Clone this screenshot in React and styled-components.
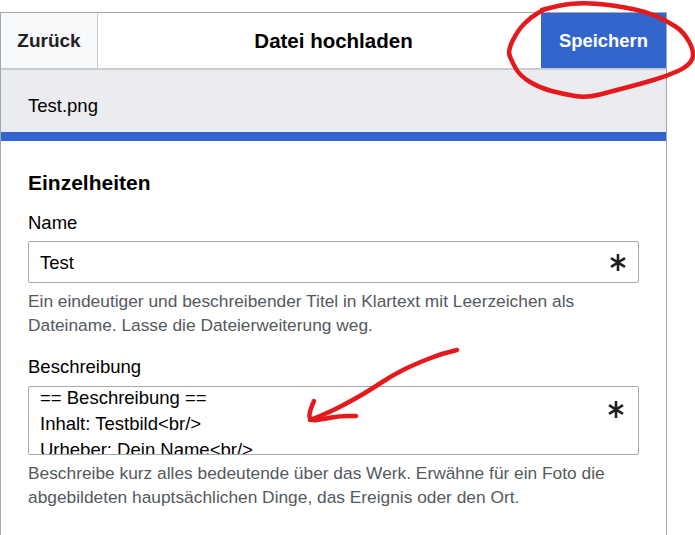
import React from 'react';
import styled, { createGlobalStyle } from 'styled-components';

const GlobalStyle = createGlobalStyle`
  html, body {
    margin: 0;
    padding: 0;
    background: #fff;
    overflow: hidden;
  }
  body {
    font-family: "Liberation Sans", Arial, sans-serif;
    color: #000;
  }
`;

const Page = styled.div`
  position: relative;
  width: 695px;
  height: 535px;
  overflow: hidden;
  padding-top: 12px;
  box-sizing: border-box;
`;

const Dialog = styled.section`
  width: 667px;
  height: 530px;
  box-sizing: border-box;
  border: 1px solid #a2a9b1;
  border-bottom: 0;
`;

const Header = styled.header`
  display: flex;
  align-items: stretch;
  height: 57px;
  box-sizing: border-box;
  border-bottom: 2px solid #c8ccd1;
`;

const BackButton = styled.div`
  width: 96px;
  display: flex;
  align-items: center;
  justify-content: center;
  background: #f8f9fa;
  border-right: 1px solid #c8ccd1;
  color: #202122;
  font-size: 19px;
  font-weight: 700;
`;

const Title = styled.h1`
  flex: 1;
  margin: 0;
  padding-left: 28px;
  display: flex;
  align-items: center;
  justify-content: center;
  font-size: 20.5px;
  font-weight: 700;
`;

const SaveButton = styled.div`
  width: 125px;
  display: flex;
  align-items: center;
  justify-content: center;
  background: #36c;
  color: #fff;
  font-size: 18.4px;
  font-weight: 700;
`;

const FileBand = styled.div`
  height: 62px;
  box-sizing: border-box;
  display: flex;
  align-items: center;
  padding: 10px 0 0 27px;
  background: #eaecf0;
  font-size: 18.5px;
`;

const ProgressBar = styled.div`
  height: 9px;
  background: #36c;
`;

const Body = styled.div`
  padding: 30px 27px 0;
`;

const SectionTitle = styled.h2`
  margin: 0 0 16px;
  font-size: 21px;
  line-height: 24px;
  font-weight: 700;
`;

const Field = styled.div`
  margin-bottom: 18px;
`;

const Label = styled.div`
  font-size: 18.5px;
  line-height: 24px;
  margin-bottom: ${(p) => p.$gap}px;
`;

const InputBox = styled.div`
  position: relative;
  width: 611px;
  box-sizing: border-box;
  height: ${(p) => p.$height}px;
  border: 1px solid #a2a9b1;
  border-radius: 2px;
  padding: 0 11px;
  font-size: 18.5px;
  line-height: 26px;
  overflow: hidden;
`;

const InputText = styled.div`
  margin-top: ${(p) => p.$offset}px;
`;

const Required = styled.svg`
  position: absolute;
  right: ${(p) => p.$right}px;
  top: ${(p) => p.$top}px;
  width: 16px;
  height: 17px;
`;

const Help = styled.p`
  margin: 6px 0 0;
  font-size: 17.33px;
  line-height: 24px;
  color: #54595d;
`;

const Scribbles = styled.svg`
  position: absolute;
  left: 0;
  top: 0;
  width: 695px;
  height: 535px;
  pointer-events: none;
`;

const Stroke = styled.path`
  fill: none;
  stroke: #e5191c;
  stroke-width: 4.5;
  stroke-linecap: round;
  stroke-linejoin: round;
`;

// hand drawn marks, smoothed through the midpoints
function smooth(points) {
  let d = `M${points[0][0]} ${points[0][1]}`;
  for (let i = 1; i < points.length - 1; i++) {
    const mx = (points[i][0] + points[i + 1][0]) / 2;
    const my = (points[i][1] + points[i + 1][1]) / 2;
    d += `Q${points[i][0]} ${points[i][1]} ${mx} ${my}`;
  }
  const last = points[points.length - 1];
  return `${d}L${last[0]} ${last[1]}`;
}

const circle = [
  [542, 10], [560, 5], [580, 3], [602, 4], [623, 7], [647, 12], [667, 21], [684, 32],
  [695, 53], [689, 66], [667, 76], [640, 84], [613, 91], [587, 98], [563, 94], [540, 88],
  [520, 76], [511, 60], [508, 50], [518, 30], [531, 17], [545, 9],
];

const arrowShaft = [
  [457, 350], [443, 353], [413, 365], [393, 375], [370, 390], [353, 400], [330, 412], [310, 420],
];

const arrowHead = [
  [314, 401], [309, 412], [310, 421], [323, 419], [340, 416], [356, 416],
];

function Star({ top, right }) {
  return (
    <Required $top={top} $right={right} viewBox="0 0 16 17">
      <path d="M8 0v17M1 4.2l14 8.6M15 4.2 1 12.8" stroke="#202122" strokeWidth="2.6" fill="none" />
    </Required>
  );
}

export default function App() {
  return (
    <Page>
      <GlobalStyle />
      <Dialog>
        <Header>
          <BackButton>Zurück</BackButton>
          <Title>Datei hochladen</Title>
          <SaveButton>Speichern</SaveButton>
        </Header>
        <FileBand>Test.png</FileBand>
        <ProgressBar />
        <Body>
          <SectionTitle>Einzelheiten</SectionTitle>
          <Field>
            <Label $gap={6}>Name</Label>
            <InputBox $height={42}>
              <InputText $offset={8}>Test</InputText>
              <Star top={12} right={12} />
            </InputBox>
            <Help>
              Ein eindeutiger und beschreibender Titel in Klartext mit Leerzeichen als
              Dateiname. Lasse die Dateierweiterung weg.
            </Help>
          </Field>
          <Field>
            <Label $gap={7}>Beschreibung</Label>
            <InputBox $height={69}>
              <InputText $offset={-2}>
                == Beschreibung ==
                <br />
                Inhalt: Testbild&lt;br/&gt;
                <br />
                Urheber: Dein Name&lt;br/&gt;
              </InputText>
              <Star top={14} right={14} />
            </InputBox>
            <Help>
              Beschreibe kurz alles bedeutende über das Werk. Erwähne für ein Foto die
              abgebildeten hauptsächlichen Dinge, das Ereignis oder den Ort.
            </Help>
          </Field>
        </Body>
      </Dialog>
      <Scribbles viewBox="0 0 695 535">
        <Stroke d={smooth(circle)} />
        <Stroke d={smooth(arrowShaft)} />
        <Stroke d={smooth(arrowHead)} />
      </Scribbles>
    </Page>
  );
}
